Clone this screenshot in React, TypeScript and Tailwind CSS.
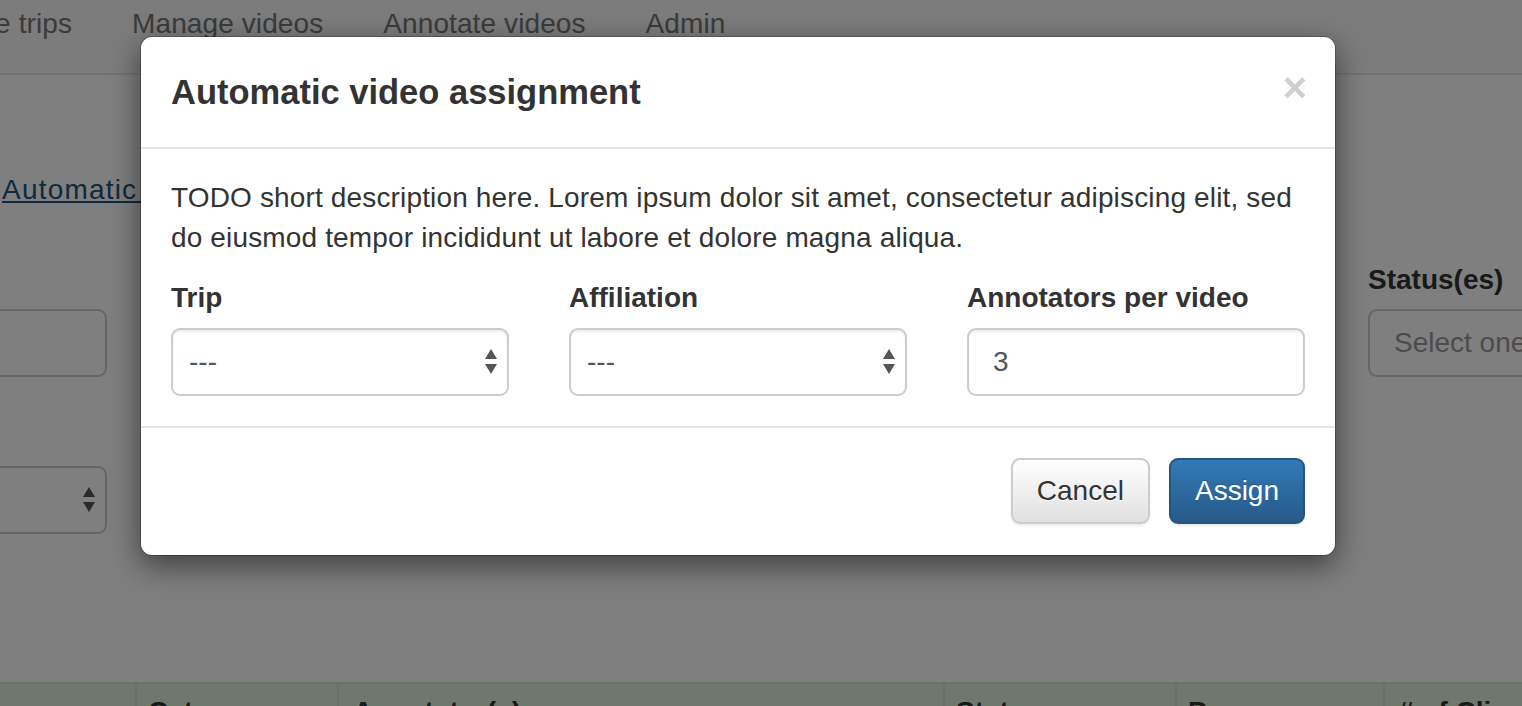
import React from 'react';

const font = "font-['Liberation_Sans','Helvetica_Neue',Arial,sans-serif]";

function SelectArrows({ className = '' }: { className?: string }) {
  return (
    <svg width="12" height="26" viewBox="0 0 12 26" className={className}>
      <path d="M6 0 L12 10 L0 10 Z" fill="currentColor" />
      <path d="M0 15 L12 15 L6 25 Z" fill="currentColor" />
    </svg>
  );
}

function FakeSelect({ value }: { value: string }) {
  return (
    <div className="h-[68px] rounded-[9px] border-2 border-[#cccccc] bg-white shadow-[inset_0_2px_2px_rgba(0,0,0,0.075)] flex items-center justify-between pl-[16px] pr-[10px] text-[#555555]">
      <span>{value}</span>
      <SelectArrows className="text-[#555555]" />
    </div>
  );
}

export default function App() {
  return (
    <div className={`${font} relative w-full h-[706px] overflow-hidden bg-white text-[28px] leading-[40px] text-[#333333]`}>
      {/* page behind the modal */}
      <nav className="-mt-[26px] h-[101px] bg-[#f8f8f8] border-b-2 border-[#e7e7e7] flex items-center">
        <ul className="flex -ml-[121px] text-[#777777] tracking-[0.1px]">
          {['Manage trips', 'Manage videos', 'Annotate videos', 'Admin'].map((item) => (
            <li key={item} className="px-[30px]">{item}</li>
          ))}
        </ul>
      </nav>

      <div className="pt-[95px] pl-[2px]">
        <a className="text-[#23527c] underline whitespace-nowrap tracking-[1.2px]">Automatic video assignment</a>
      </div>

      <div className="mt-[50px] flex">
        <div className="w-[307px] shrink-0 -ml-[200px]">
          <label className="block font-bold mb-[9px]">Trip</label>
          <div className="h-[68px] rounded-[9px] border-2 border-[#cccccc]" />
          <label className="block font-bold mt-[40px] mb-[9px]">Affiliation</label>
          <div className="h-[68px] rounded-[9px] border-2 border-[#cccccc] flex items-center justify-end pr-[10px]">
            <SelectArrows className="text-[#555555]" />
          </div>
        </div>
        <div className="w-[1261px] shrink-0" />
        <div className="w-[320px] shrink-0">
          <label className="block font-bold mb-[9px]">Status(es)</label>
          <div className="h-[68px] rounded-[9px] border-2 border-[#cccccc] flex items-center pl-[24px] text-[#999999] whitespace-nowrap">
            Select one or more
          </div>
        </div>
      </div>

      <div className="mt-[148px] bg-[#dff0d8] border-t-2 border-[#dddddd] flex h-[40px] font-bold">
        <div className="w-[135px] shrink-0" />
        <div className="w-[202px] shrink-0 border-l-2 border-[#dddddd] pl-[11px] pt-[8px]">Category</div>
        <div className="w-[606px] shrink-0 border-l-2 border-[#dddddd] pl-[14px] pt-[8px]">Annotator(s)</div>
        <div className="w-[232px] shrink-0 border-l-2 border-[#dddddd] pl-[11px] pt-[8px]">Status</div>
        <div className="w-[208px] shrink-0 border-l-2 border-[#dddddd] pl-[11px] pt-[8px]">Progress</div>
        <div className="flex-1 border-l-2 border-[#dddddd] pl-[13px] pt-[8px] whitespace-nowrap">
          # of Clips
        </div>
      </div>

      {/* backdrop */}
      <div className="absolute inset-0 bg-black/50" />

      {/* modal */}
      <div className="absolute left-[140px] top-[36px] w-[1196px] rounded-[12px] bg-white border border-black/20 shadow-[0_10px_30px_rgba(0,0,0,0.5)] bg-clip-padding">
        <div className="flex items-start justify-between px-[30px] py-[30px] border-b-2 border-[#e5e5e5] h-[112px]">
          <h4 className="text-[34.5px] leading-[51px] font-semibold text-[#333333]">Automatic video assignment</h4>
          <button className="text-[42px] leading-[42px] font-bold text-black/20 mt-[0px] -mr-[2px]">×</button>
        </div>

        <div className="px-[30px] pt-[29px] pb-[30px]">
          <p className="mb-[20px] tracking-[0.15px]">
            TODO short description here. Lorem ipsum dolor sit amet, consectetur adipiscing elit, sed do eiusmod tempor incididunt ut labore et dolore magna aliqua.
          </p>
          <div className="grid grid-cols-3 gap-x-[60px]">
            <div>
              <label className="block font-bold mb-[10px]">Trip</label>
              <FakeSelect value="---" />
            </div>
            <div>
              <label className="block font-bold mb-[10px]">Affiliation</label>
              <FakeSelect value="---" />
            </div>
            <div>
              <label className="block font-bold mb-[10px]">Annotators per video</label>
              <div className="h-[68px] rounded-[9px] border-2 border-[#cccccc] shadow-[inset_0_2px_2px_rgba(0,0,0,0.075)] flex items-center pl-[24px] text-[#555555]">
                3
              </div>
            </div>
          </div>
        </div>

        <div className="border-t-2 border-[#e5e5e5] px-[30px] pt-[30px] pb-[31px] flex justify-end gap-[19px]">
          <button className="h-[66px] px-[24px] rounded-[9px] border-2 border-[#cccccc] bg-gradient-to-b from-white to-[#e0e0e0] text-[#333333] shadow-[0_2px_2px_rgba(0,0,0,0.075)] [text-shadow:0_1px_0_#fff]">
            Cancel
          </button>
          <button className="h-[66px] px-[24px] rounded-[9px] border-2 border-[#245580] bg-gradient-to-b from-[#337ab7] to-[#265a88] text-white shadow-[0_2px_2px_rgba(0,0,0,0.075)] [text-shadow:0_-1px_0_rgba(0,0,0,0.2)]">
            Assign
          </button>
        </div>
      </div>
    </div>
  );
}
